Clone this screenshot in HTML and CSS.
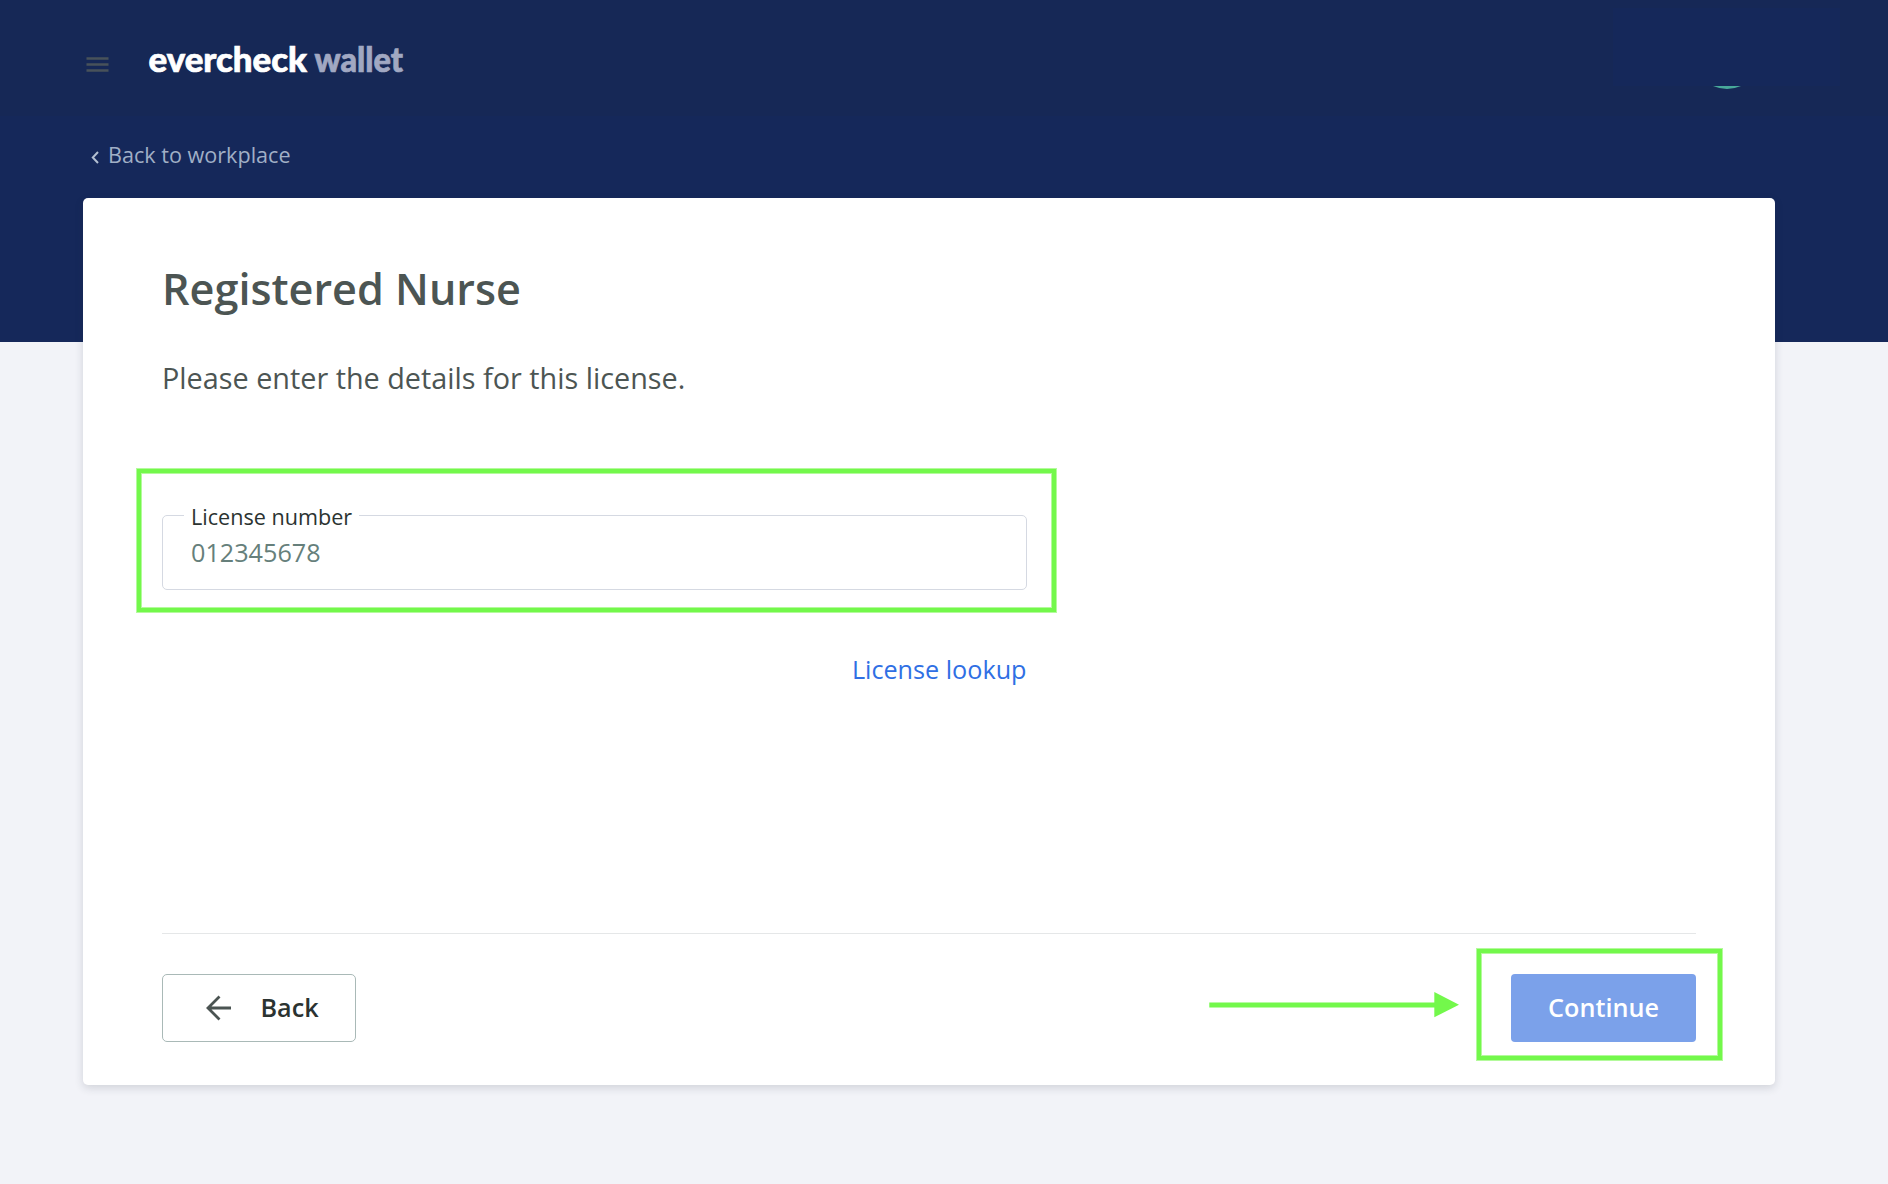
FILE: index.html
```
<!DOCTYPE html>
<html lang="en">
<head>
  <meta charset="UTF-8">
  <title>EverCheck Wallet</title>
  <link rel="stylesheet" href="styles.css">
</head>
<body>

  <!-- Banner -->
  <div class="banner">
    <header class="header">
      <svg class="menu-icon" width="22" height="16" viewBox="0 0 22 16">
        <path d="M0.5 1.5h22M0.5 7.5h22M0.5 13.5h22" stroke="#48525a" stroke-width="2.4"/>
      </svg>
      <svg class="logo" width="270" height="52" viewBox="0 0 270 52">
        <text class="logo-main" x="4.5" y="38.5" textLength="158.5" lengthAdjust="spacingAndGlyphs">evercheck</text>
        <text class="logo-sub" x="170.5" y="38.5" textLength="88.5" lengthAdjust="spacingAndGlyphs">wallet</text>
      </svg>
      <div class="account">
        <svg class="avatar" width="28" height="4" viewBox="0 0 28 4">
          <path d="M0 0h28Q14 6 0 0z" fill="#48a99a"/>
        </svg>
      </div>
    </header>
    <a class="back-link" href="#">
      <svg width="8" height="13" viewBox="0 0 8 13">
        <path d="M7 1L1.8 6.5L7 12" fill="none" stroke="#b3c0d2" stroke-width="2"/>
      </svg>
      <span>Back to workplace</span>
    </a>
  </div>

  <!-- License form -->
  <form class="card">
    <h1>Registered Nurse</h1>
    <p class="intro">Please enter the details for this license.</p>

    <div class="highlight field-highlight">
      <div class="field">
        <label for="license">License number</label>
        <input type="text" id="license" value="012345678">
      </div>
    </div>

    <div class="lookup">
      <a href="#">License lookup</a>
    </div>

    <div class="actions">
      <button type="button" class="back-btn">
        <svg width="26" height="26" viewBox="0 0 26 26">
          <path d="M25 13H2M13.5 1.5L2 13L13.5 24.5" fill="none" stroke="#4b5452" stroke-width="2.8"/>
        </svg>
        <span>Back</span>
      </button>
      <svg class="arrow" width="250" height="26" viewBox="0 0 250 26">
        <path d="M0.3 13h226" stroke="#73f84b" stroke-width="5.2"/>
        <path d="M225.3 0L250 12.7L225.3 25.3z" fill="#73f84b"/>
      </svg>
      <div class="highlight button-highlight">
        <button type="submit" class="continue-btn">Continue</button>
      </div>
    </div>
  </form>

</body>
</html>
```
FILE: styles.css
```
* {
  box-sizing: border-box;
}

body {
  margin: 0;
  height: 1184px;
  overflow: hidden;
  font-family: 'Open Sans', sans-serif;
  background-color: #f2f3f8;
}

.banner {
  height: 342px;
  background-color: #15285a;
}

.header {
  display: flex;
  height: 116px;
  padding-left: 86px;
  background-color: #162856;
}

.menu-icon {
  margin-top: 57px;
  overflow: visible;
}

.logo {
  margin-top: 33px;
  margin-left: 36px;
}

.logo text {
  font-family: Lato, sans-serif;
  font-size: 34.5px;
  font-weight: 900;
  stroke-width: 0.7px;
}

.logo .logo-main {
  fill: #fff;
  stroke: #fff;
}

.logo .logo-sub {
  fill: #a1a8c2;
  stroke: #a1a8c2;
  font-size: 33.5px;
}

.account {
  width: 227px;
  height: 78px;
  margin-top: 8px;
  margin-left: auto;
  margin-right: 48px;
  background-color: #15285a;
}

.avatar {
  display: block;
  margin-top: 78px;
  margin-left: 100px;
}

.back-link {
  display: flex;
  align-items: center;
  gap: 9px;
  height: 40px;
  margin-top: 18px;
  padding-left: 91px;
  color: #a0afc6;
  font-size: 21.6px;
  text-decoration: none;
}

.back-link svg {
  margin-top: 6px;
}

.card {
  width: 1692px;
  height: 887px;
  margin-top: -144px;
  margin-left: 83px;
  padding: 61px 79px 0;
  position: relative;
  background: white;
  border-radius: 5px;
  box-shadow: 0 3px 8px rgba(40, 45, 65, 0.16);
}

h1 {
  margin: 0;
  color: #4c5553;
  font-size: 43.2px;
  font-weight: 600;
  line-height: 60px;
}

.intro {
  margin: 39px 0 0;
  color: #4c5553;
  font-size: 28.8px;
  line-height: 40px;
}

/* green frame with softened edges */
.highlight {
  border: 4px solid #73f84b;
  box-shadow: 0 0 0 1px #b4fa9c, inset 0 0 0 1px #b4fa9c;
}

.field-highlight {
  width: 919px;
  height: 143px;
  margin-top: 71px;
  margin-left: -25px;
  padding: 42px 0 0 21px;
}

.field {
  position: relative;
  width: 865px;
  height: 75px;
}

.field input {
  width: 100%;
  height: 100%;
  padding: 0 28px 2px;
  border: 1px solid #d5d9e2;
  border-radius: 5px;
  outline: none;
  color: #667f7b;
  font-family: inherit;
  font-size: 25.2px;
}

.field label {
  position: absolute;
  top: -13px;
  left: 22px;
  padding: 0 7px;
  background: white;
  color: #2b3331;
  font-size: 21.6px;
  line-height: 30px;
}

.lookup {
  width: 864.5px;
  margin-top: 37px;
  text-align: right;
}

.lookup a {
  color: #2f6fe4;
  font-size: 25.2px;
  line-height: 40px;
  text-decoration: none;
}

.actions {
  display: flex;
  height: 110px;
  margin-top: 244px;
  border-top: 1px solid #e5e7e8;
}

.back-btn {
  display: flex;
  align-items: center;
  gap: 28.5px;
  width: 194px;
  height: 68px;
  margin-top: 40px;
  padding: 0 0 0 43px;
  border: 1px solid #a9b9b7;
  border-radius: 5px;
  background: white;
  color: #2b3331;
  font-family: inherit;
  font-size: 25.2px;
  font-weight: 600;
}

.back-btn span {
  padding-bottom: 2px;
}

.arrow {
  margin-top: 58px;
  margin-left: auto;
}

.button-highlight {
  width: 245px;
  height: 111px;
  margin-top: 15px;
  margin-left: 18px;
  margin-right: -26px;
  padding: 21px 0 0 30px;
}

.continue-btn {
  display: block;
  width: 185px;
  height: 68px;
  padding: 0 0 2px;
  border: none;
  border-radius: 4px;
  background-color: #7ba1ea;
  color: white;
  font-family: inherit;
  font-size: 25.2px;
  font-weight: 600;
}
```
